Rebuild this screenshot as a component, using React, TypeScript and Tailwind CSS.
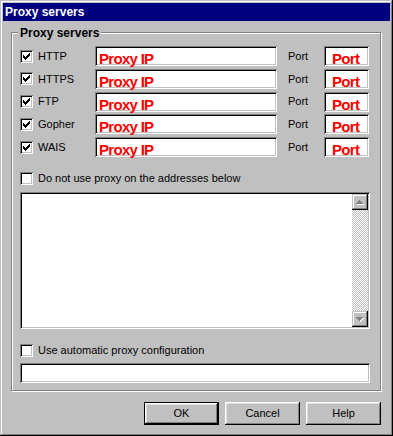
const sunken =
  "shadow-[inset_1px_1px_#808080,inset_-1px_-1px_#ffffff,inset_2px_2px_#000000,inset_-2px_-2px_#c0c0c0]"
const raised =
  "shadow-[inset_-1px_-1px_#000000,inset_1px_1px_#ffffff,inset_-2px_-2px_#808080,inset_2px_2px_#dfdfdf]"
const frame =
  "shadow-[inset_-1px_-1px_#000000,inset_1px_1px_#c0c0c0,inset_-2px_-2px_#808080,inset_2px_2px_#ffffff]"

const protocols = ["HTTP", "HTTPS", "FTP", "Gopher", "WAIS"]

function Check({ checked }: { checked?: boolean }) {
  return (
    <div className={`w-[13px] h-[13px] shrink-0 bg-white ${sunken}`}>
      {checked && (
        <svg width="13" height="13" viewBox="0 0 13 13" shapeRendering="crispEdges">
          {[2, 3, 4, 3, 2, 1, 0].map((y, i) => (
            <rect key={i} x={3 + i} y={3 + y} width="1" height="3" fill="#000" />
          ))}
        </svg>
      )}
    </div>
  )
}

function Arrow({ up }: { up?: boolean }) {
  const rows = up
    ? [
        [7, 1],
        [6, 3],
        [5, 5],
        [4, 7],
      ]
    : [
        [4, 7],
        [5, 5],
        [6, 3],
        [7, 1],
      ]
  return (
    <div className={`w-[16px] h-[16px] bg-[#c0c0c0] ${frame}`}>
      <svg width="16" height="16" viewBox="0 0 16 16" shapeRendering="crispEdges">
        {rows.map(([x, w], i) => (
          <rect key={"s" + i} x={x + 1} y={7 + i} width={w} height="1" fill="#fff" />
        ))}
        {rows.map(([x, w], i) => (
          <rect key={i} x={x} y={6 + i} width={w} height="1" fill="#808080" />
        ))}
      </svg>
    </div>
  )
}

function Button({ label, isDefault }: { label: string; isDefault?: boolean }) {
  return (
    <div className={`w-[75px] h-[23px] ${isDefault ? "border border-black" : ""}`}>
      <div className={`w-full h-full flex items-center justify-center text-[11px] text-black bg-[#c0c0c0] ${raised}`}>
        {label}
      </div>
    </div>
  )
}

export default function App() {
  return (
    <div
      className={`w-[393px] h-[436px] p-[3px] bg-[#c0c0c0] flex flex-col font-['Liberation_Sans',Arial,sans-serif] text-black ${frame}`}
    >
      <div className="h-[18px] bg-[#000080] flex items-center pl-[2px] text-white font-bold text-[12px]">
        Proxy servers
      </div>

      <div className="relative mt-[11px] ml-[8px] mr-[9px] border border-[#808080] shadow-[inset_1px_1px_#ffffff,1px_1px_#ffffff] pt-[13px] pl-[8px] pr-[10px] pb-[7px]">
        <span className="absolute top-[-7px] left-[6px] px-[2px] bg-[#c0c0c0] font-bold text-[12px] leading-[14px]">
          Proxy servers
        </span>

        <div className="flex flex-col gap-[2.75px]">
          {protocols.map((p) => (
            <div key={p} className="flex items-center h-[20px]">
              <Check checked />
              <span className="ml-[5px] w-[57px] text-[11px]">{p}</span>
              <div
                className={`w-[182px] h-[20px] bg-white ${sunken} pl-[4px] pt-[5px] leading-[15px] text-[15px] font-bold text-[#ff0000] tracking-[-0.7px]`}
              >
                Proxy IP
              </div>
              <span className="ml-[11px] w-[36px] text-[11px]">Port</span>
              <div
                className={`w-[45px] h-[20px] bg-white ${sunken} pl-[8px] pt-[5px] leading-[15px] text-[15px] font-bold text-[#ff0000] tracking-[-0.7px]`}
              >
                Port
              </div>
            </div>
          ))}
        </div>

        <div className="mt-[15px] flex items-center h-[13px]">
          <Check />
          <span className="ml-[5px] text-[11px]">Do not use proxy on the addresses below</span>
        </div>

        <div className={`mt-[7px] h-[137px] bg-white p-[2px] flex ${sunken}`}>
          <div className="flex-1" />
          <div className="w-[16px] flex flex-col">
            <Arrow up />
            <div className="flex-1 bg-[repeating-conic-gradient(#c0c0c0_0_25%,#ffffff_0_50%)] bg-[length:2px_2px]" />
            <Arrow />
          </div>
        </div>

        <div className="mt-[15px] flex items-center h-[13px]">
          <Check />
          <span className="ml-[5px] text-[11px]">Use automatic proxy configuration</span>
        </div>

        <div className={`mt-[6px] h-[20px] bg-white ${sunken}`} />
      </div>

      <div className="mt-[11px] pr-[9px] flex justify-end gap-[6px]">
        <Button label="OK" isDefault />
        <Button label="Cancel" />
        <Button label="Help" />
      </div>
    </div>
  )
}
